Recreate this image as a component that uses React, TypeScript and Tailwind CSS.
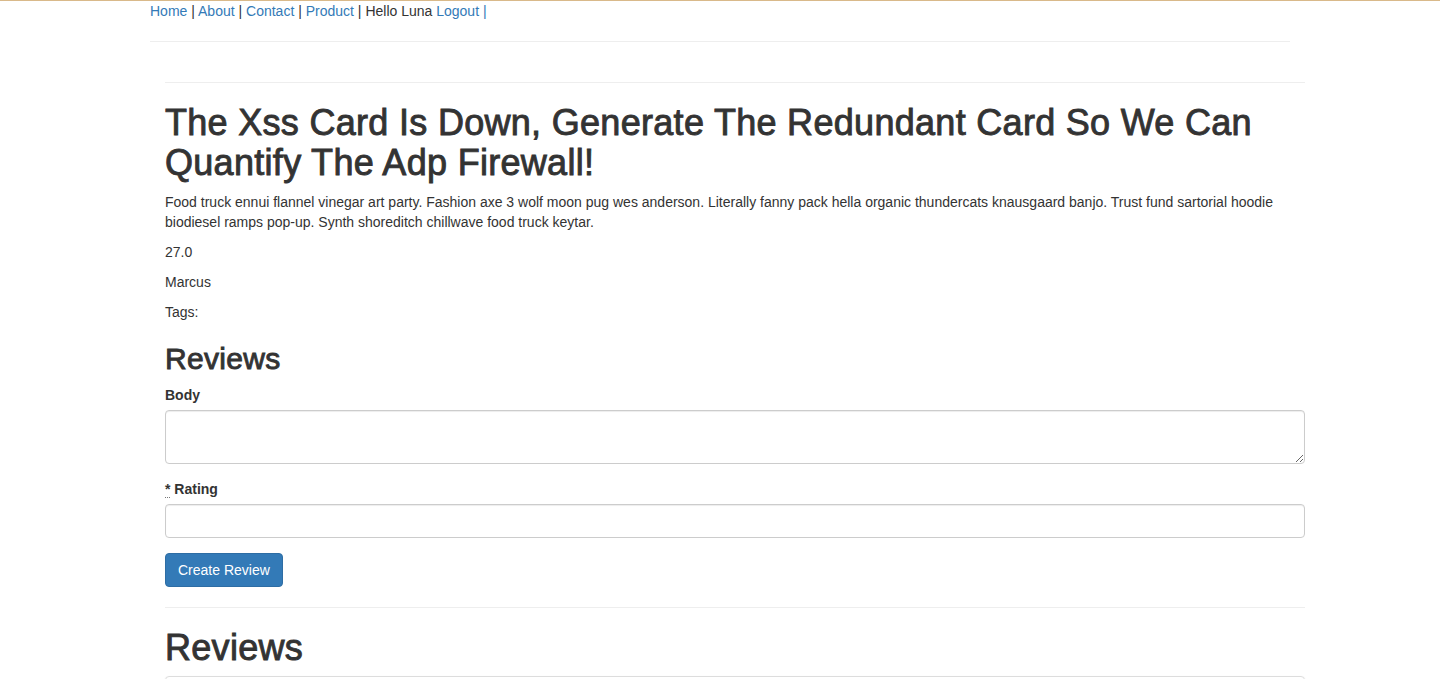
const navLinks = ["Home", "About", "Contact", "Product"];

const headingCls = "leading-[1.1] font-normal [-webkit-text-stroke:0.9px_#333] tracking-[0.3px]";

export default function App() {
  return (
    <div className="h-[679px] overflow-hidden border-t border-[#d9b98a] bg-white font-['Liberation_Sans',Arial,sans-serif] text-[14px] leading-[20px] text-[#333]">
      <div className="mx-auto w-[1170px] px-[15px]">
        <nav>
          {navLinks.map((name) => (
            <span key={name}>
              <a href="#" className="text-[#337ab7]">
                {name}
              </a>{" "}
              |{" "}
            </span>
          ))}
          Hello Luna <a href="#" className="text-[#337ab7]">Logout |</a>
        </nav>
        <hr className="mt-5 border-t border-[#eee]" />
      </div>

      <main className="mx-auto w-[1170px] pt-10 pl-[30px]">
        <hr className="mb-5 border-t border-[#eee]" />

        <h1 className={`mt-5 mb-2.5 text-[36px] ${headingCls}`}>
          The Xss Card Is Down, Generate The Redundant Card So We Can Quantify The Adp Firewall!
        </h1>
        <p className="mb-2.5">
          Food truck ennui flannel vinegar art party. Fashion axe 3 wolf moon pug wes anderson. Literally fanny pack hella
          organic thundercats knausgaard banjo. Trust fund sartorial hoodie biodiesel ramps pop-up. Synth shoreditch
          chillwave food truck keytar.
        </p>
        <p className="mb-2.5">27.0</p>
        <p className="mb-2.5">Marcus</p>
        <p className="mb-2.5">Tags:</p>

        <h2 className={`mt-5 mb-2.5 text-[30px] ${headingCls}`}>Reviews</h2>

        <form onSubmit={(e) => e.preventDefault()}>
          <div className="mb-[15px]">
            <label className="mb-[5px] block font-bold">Body</label>
            <textarea
              rows={2}
              className="block h-[54px] w-full rounded-[4px] border border-[#ccc] px-3 py-1.5 shadow-[inset_0_1px_1px_rgba(0,0,0,0.075)] outline-none"
            />
          </div>
          <div className="mb-[15px]">
            <label className="mb-[5px] block font-bold">
              <abbr title="required" className="border-b border-dotted border-[#777] no-underline">
                *
              </abbr>{" "}
              Rating
            </label>
            <input
              type="text"
              className="block h-[34px] w-full rounded-[4px] border border-[#ccc] px-3 py-1.5 shadow-[inset_0_1px_1px_rgba(0,0,0,0.075)] outline-none"
            />
          </div>
          <button
            type="submit"
            className="h-[34px] rounded-[4px] border border-[#2e6da4] bg-[#337ab7] px-3 text-[14px] text-white"
          >
            Create Review
          </button>
        </form>

        <hr className="my-5 border-t border-[#eee]" />

        <h1 className={`mt-5 mb-2 text-[36px] ${headingCls}`}>Reviews</h1>
        <div className="h-10 rounded-[4px] border border-[#ddd] shadow-[0_1px_2px_rgba(0,0,0,0.1)]" />
      </main>
    </div>
  );
}
